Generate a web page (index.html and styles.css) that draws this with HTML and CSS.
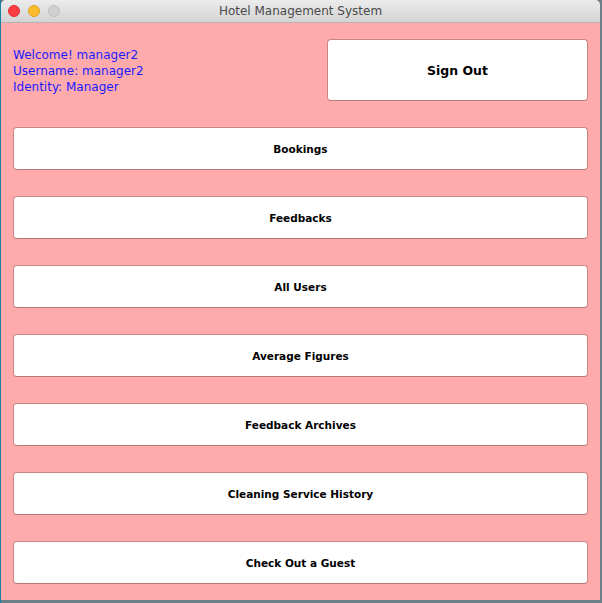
FILE: index.html
```html
<!DOCTYPE html>
<html>
<head>
<meta charset="utf-8">
<link rel="stylesheet" href="styles.css">
</head>
<body>
<div class="window">
  <div class="titlebar">
    <div class="lights">
      <span class="light red"></span>
      <span class="light yellow"></span>
      <span class="light gray"></span>
    </div>
    <div class="title">Hotel Management System</div>
  </div>
  <div class="content">
    <div class="header">
      <div class="info">
        <div>Welcome! manager2</div>
        <div>Username: manager2</div>
        <div>Identity: Manager</div>
      </div>
      <button class="btn signout">Sign Out</button>
    </div>
    <div class="menu">
      <button class="btn">Bookings</button>
      <button class="btn">Feedbacks</button>
      <button class="btn">All Users</button>
      <button class="btn">Average Figures</button>
      <button class="btn">Feedback Archives</button>
      <button class="btn">Cleaning Service History</button>
      <button class="btn">Check Out a Guest</button>
    </div>
  </div>
</div>
</body>
</html>
```

FILE: styles.css
```css
html, body {
  margin: 0;
  padding: 0;
}
body {
  width: 602px;
  height: 603px;
  background: linear-gradient(90deg, #1c7fa6 0, #1c7fa6 1px, #6b7f86 1px);
  overflow: hidden;
  font-family: "DejaVu Sans", sans-serif;
}
.window {
  margin-left: 1px;
  width: 599px;
  height: 600px;
  display: flex;
  flex-direction: column;
  background: #ffaaab;
  border-radius: 5px 5px 0 0;
  overflow: hidden;
}
.titlebar {
  height: 22px;
  flex: none;
  position: relative;
  background: linear-gradient(#ececec, #d3d3d3);
  border-bottom: 1px solid #b4b4b4;
  display: flex;
  align-items: center;
  justify-content: center;
}
.lights {
  position: absolute;
  left: 7px;
  top: 5px;
  display: flex;
  gap: 8px;
}
.light {
  width: 12px;
  height: 12px;
  border-radius: 50%;
  box-sizing: border-box;
}
.red { background: #fc3c44; border: 1px solid #de2f36; }
.yellow { background: #fdbc2e; border: 1px solid #dea123; }
.gray { background: #d0d0d0; border: 1px solid #bdbdbd; }
.title {
  font-size: 12px;
  color: #4a4a4a;
}
.content {
  flex: 1;
  padding: 16px 12px 0 12px;
  display: flex;
  flex-direction: column;
}
.header {
  display: flex;
  justify-content: space-between;
  align-items: flex-start;
}
.info {
  margin-top: 8px;
  color: #1a1aff;
  font-size: 12px;
  line-height: 16px;
}
.btn {
  font-family: "DejaVu Sans", sans-serif;
  font-weight: bold;
  font-size: 10.5px;
  color: #000;
  background: #fff;
  border: 1px solid #c98686;
  border-bottom-color: #b57878;
  border-radius: 4px;
  height: 43px;
  padding: 0;
  box-sizing: border-box;
}
.signout {
  width: 261px;
  height: 62px;
  font-size: 12.5px;
}
.menu {
  margin-top: 26px;
  display: flex;
  flex-direction: column;
  gap: 26px;
}
```
